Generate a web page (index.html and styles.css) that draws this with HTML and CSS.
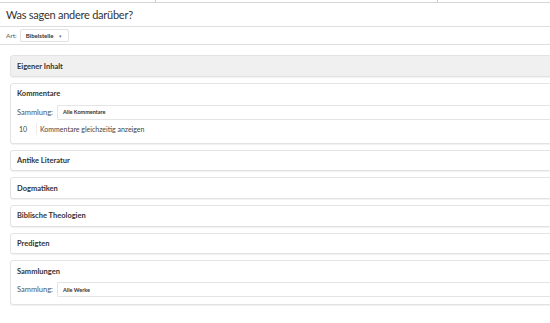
FILE: index.html
```html
<!DOCTYPE html>
<html lang="de">
<head>
<meta charset="utf-8">
<title>Was sagen andere darüber?</title>
<link rel="stylesheet" href="styles.css">
</head>
<body>
<div class="topstrip"><span class="sep s1"></span><span class="sep s2"></span></div>
<header class="header"><h1 class="title">Was sagen andere darüber?</h1></header>
<div class="toolbar">
  <span class="label">Art:</span>
  <span class="select">Bibelstelle <span class="caret">▾</span></span>
</div>
<main class="content">
  <section class="panel panel-gray"><div class="panel-head">Eigener Inhalt</div></section>
  <section class="panel">
    <div class="panel-head">Kommentare</div>
    <div class="panel-body">
      <div class="row"><span class="row-label">Sammlung:</span><span class="field">Alle Kommentare</span></div>
      <div class="row row-count"><span class="num">10</span><span class="count-text">Kommentare gleichzeitig anzeigen</span></div>
    </div>
  </section>
  <section class="panel"><div class="panel-head">Antike Literatur</div></section>
  <section class="panel"><div class="panel-head">Dogmatiken</div></section>
  <section class="panel"><div class="panel-head">Biblische Theologien</div></section>
  <section class="panel"><div class="panel-head">Predigten</div></section>
  <section class="panel">
    <div class="panel-head">Sammlungen</div>
    <div class="panel-body">
      <div class="row"><span class="row-label">Sammlung:</span><span class="field">Alle Werke</span></div>
    </div>
  </section>
</main>
</body>
</html>
```
FILE: styles.css
```css
html, body {
  margin: 0;
  padding: 0;
  width: 550px;
  height: 323px;
  overflow: hidden;
  background: #ffffff;
  font-family: "Lato", "Noto Sans", sans-serif;
  color: #333333;
}
.topstrip {
  height: 2px;
  border-bottom: 1px solid #d6d6d6;
  position: relative;
}
.sep { position: absolute; top: 0; width: 1px; height: 3px; background: #d0d0d0; }
.s1 { left: 155px; }
.s2 { left: 437px; }
.header {
  height: 23px;
  border-bottom: 1px solid #dedede;
  display: flex;
  align-items: center;
  padding-left: 6px;
}
.title {
  margin: 0;
  font-size: 11px;
  font-weight: 400;
  color: #333333;
  letter-spacing: -0.25px;
}
.toolbar {
  height: 17px;
  border-bottom: 1px solid #dedede;
  display: flex;
  align-items: center;
  padding-left: 6px;
  gap: 3px;
}
.label { font-size: 6.5px; color: #555; }
.select {
  display: inline-flex;
  align-items: center;
  height: 11px;
  padding: 0 6px 0 5px;
  border: 1px solid #e2e2e2;
  border-radius: 2px;
  font-size: 6px;
  font-weight: 700;
  color: #333;
  gap: 6px;
}
.caret { font-size: 5px; color: #777; font-weight: 400; }
.content {
  padding: 10px 0 0 10px;
  display: flex;
  flex-direction: column;
  gap: 6px;
}
.panel {
  width: 560px;
  border: 1px solid #e3e3e3;
  border-radius: 3px;
  box-shadow: 0 1px 1px rgba(0,0,0,0.06);
  background: #fff;
}
.panel-gray { background: #f0f0f0; }
.panel-head {
  height: 19.7px;
  display: flex;
  align-items: center;
  padding-left: 6px;
  font-size: 7.5px;
  font-weight: 700;
  color: #333;
}
.panel-gray .panel-head { height: 20px; }
.panel-body {
  padding: 1px 0 7px 6px;
  display: flex;
  flex-direction: column;
  gap: 2px;
}
.row { display: flex; align-items: center; gap: 4px; }
.row-label { font-size: 7.5px; color: #555555; width: 36px; }
.field {
  flex: 1;
  height: 13px;
  border: 1px solid #e4e4e4;
  border-right: none;
  border-radius: 2px 0 0 2px;
  display: flex;
  align-items: center;
  padding-left: 5px;
  font-size: 5.5px;
  font-weight: 700;
  color: #333;
}
.row-count { gap: 3px; height: 14px; }
.num {
  width: 17px;
  height: 12px;
  border-right: 1px solid #ececec;
  display: flex;
  align-items: center;
  padding-left: 2px;
  font-size: 7px;
  color: #444;
}
.count-text { font-size: 7px; color: #444; }
```
